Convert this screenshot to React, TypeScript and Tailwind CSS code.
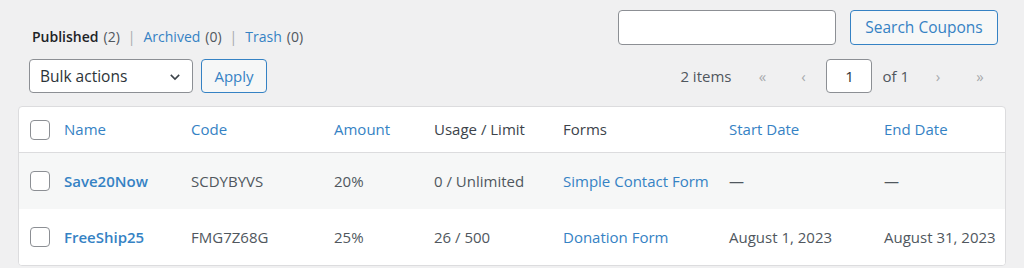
import React from "react";

type Coupon = {
  name: string;
  code: string;
  amount: string;
  usage: string;
  form: string;
  start: string;
  end: string;
};

const coupons: Coupon[] = [
  { name: "Save20Now", code: "SCDYBYVS", amount: "20%", usage: "0 / Unlimited", form: "Simple Contact Form", start: "—", end: "—" },
  { name: "FreeShip25", code: "FMG7Z68G", amount: "25%", usage: "26 / 500", form: "Donation Form", start: "August 1, 2023", end: "August 31, 2023" },
];

const Checkbox = () => (
  <span className="block w-[20px] h-[20px] rounded-[4px] border border-[#8c8f94] bg-white" />
);

const ChevronDown = () => (
  <svg width="14" height="14" viewBox="0 0 20 20" fill="none" stroke="#3c434a" strokeWidth="2.2">
    <path d="M4 7l6 6 6-6" />
  </svg>
);

export default function App() {
  return (
    <div className="w-[1024px] h-[268px] bg-[#f0f0f1] text-[14px] text-[#50575e] font-['Open_Sans',sans-serif] overflow-hidden">
      <div className="flex justify-between pl-[32px] pr-[26px] pt-[10px]">
        <div className="flex items-end h-[37px] -mb-[2px] text-[14px] leading-[20px]">
          <span className="text-[#1d2327] font-semibold">Published</span>
          <span className="ml-[5px]">(2)</span>
          <span className="mx-[8px] text-[#a7aaad]">|</span>
          <span className="text-[#3582c4]">Archived</span>
          <span className="ml-[5px]">(0)</span>
          <span className="mx-[8px] text-[#a7aaad]">|</span>
          <span className="text-[#3582c4]">Trash</span>
          <span className="ml-[5px]">(0)</span>
        </div>
        <div className="flex gap-[14px]">
          <div className="w-[218px] h-[35px] bg-white border border-[#8c8f94] rounded-[4px]" />
          <button className="w-[148px] h-[35px] border border-[#3582c4] rounded-[4px] bg-[#f6f7f7] text-[#3582c4] text-[15.5px]">
            Search Coupons
          </button>
        </div>
      </div>

      <div className="flex justify-between items-center pl-[29px] pr-[31px] mt-[14px]">
        <div className="flex gap-[8px]">
          <div className="w-[164px] h-[34px] flex items-center justify-between bg-white border border-[#8c8f94] rounded-[4px] pl-[10px] pr-[10px] pt-[2px] text-[#2c3338] text-[15.5px]">
            <span>Bulk actions</span>
            <ChevronDown />
          </div>
          <button className="w-[66px] h-[34px] pt-[1px] border border-[#3582c4] rounded-[4px] bg-[#f6f7f7] text-[#3582c4] text-[15px]">
            Apply
          </button>
        </div>
        <div className="flex items-center text-[15px]">
          <span className="mr-[18px]">2 items</span>
          <span className="w-[26px] text-center text-[#a7aaad]">«</span>
          <span className="w-[26px] ml-[15px] text-center text-[#a7aaad]">‹</span>
          <div className="ml-[10px] w-[46px] h-[34px] flex items-center justify-center bg-white border border-[#8c8f94] rounded-[4px] text-[#2c3338]">
            1
          </div>
          <span className="ml-[10px]">of 1</span>
          <span className="w-[26px] ml-[16px] text-center text-[#a7aaad]">›</span>
          <span className="w-[26px] ml-[16px] text-center text-[#a7aaad]">»</span>
        </div>
      </div>

      <div className="mx-[18px] mt-[13px] bg-white border border-[#dcdcde] rounded-[4px] overflow-hidden">
        <div className="flex items-center h-[46px] border-b border-[#dcdcde] text-[15px]">
          <div className="w-[45px] pl-[11px]"><Checkbox /></div>
          <div className="w-[127px] text-[#3582c4]">Name</div>
          <div className="w-[143px] text-[#3582c4]">Code</div>
          <div className="w-[100px] text-[#3582c4]">Amount</div>
          <div className="w-[129px] text-[#3c434a]">Usage / Limit</div>
          <div className="w-[166px] text-[#3c434a]">Forms</div>
          <div className="w-[155px] text-[#3582c4]">Start Date</div>
          <div className="text-[#3582c4]">End Date</div>
        </div>
        {coupons.map((c, i) => (
          <div key={c.name} className={`flex items-center h-[56px] text-[15px] ${i % 2 === 0 ? "bg-[#f6f7f7]" : "bg-white"}`}>
            <div className="w-[45px] pl-[11px]"><Checkbox /></div>
            <div className="w-[127px] text-[#3582c4] font-semibold">{c.name}</div>
            <div className="w-[143px]">{c.code}</div>
            <div className="w-[100px]">{c.amount}</div>
            <div className="w-[129px]">{c.usage}</div>
            <div className="w-[166px] text-[#3582c4]">{c.form}</div>
            <div className="w-[155px]">{c.start}</div>
            <div>{c.end}</div>
          </div>
        ))}
      </div>
    </div>
  );
}
